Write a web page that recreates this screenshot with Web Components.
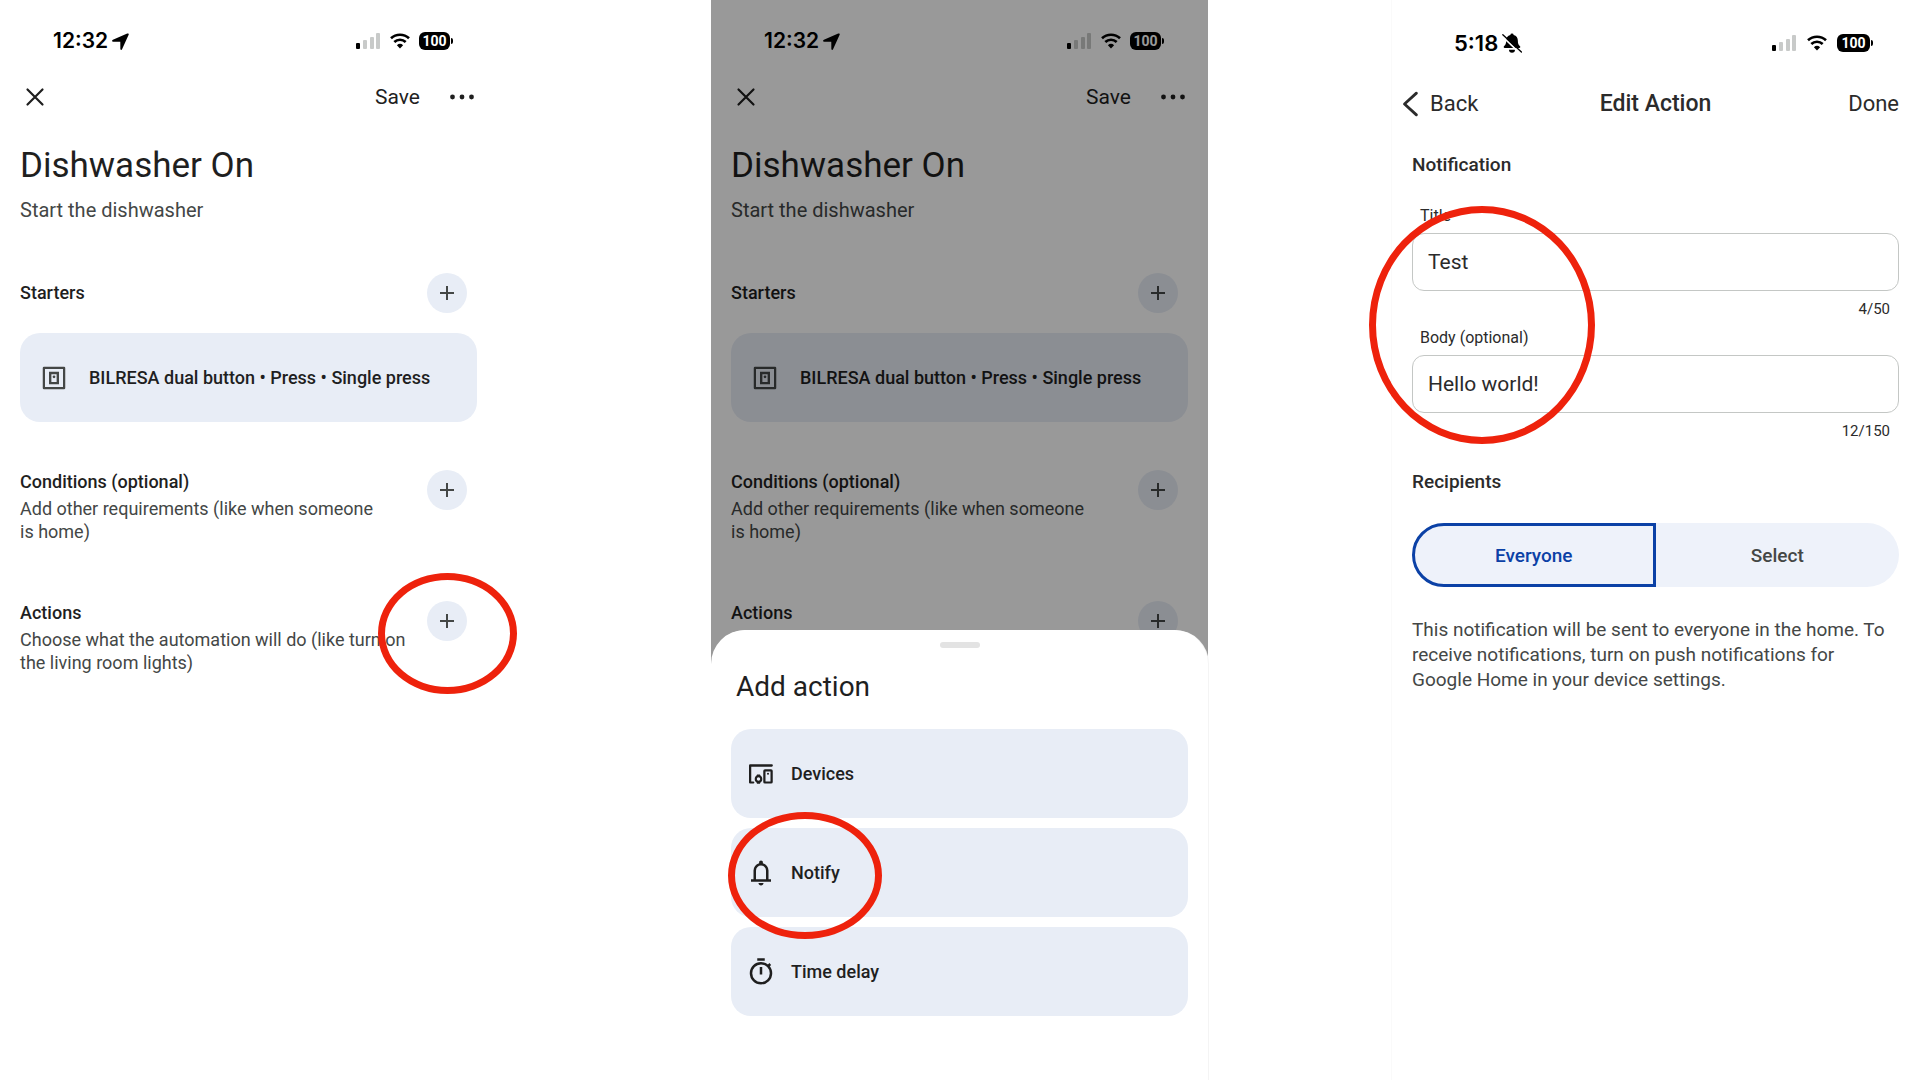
<!DOCTYPE html>
<html lang="en">
<head>
  <meta charset="utf-8">
  <meta name="viewport" content="width=device-width, initial-scale=1">
  <title>Dishwasher On</title>
  <style>
    :root {
      --text: #1f1f1f;
      --muted: #444746;
      --surface: #e8edf6;
      --primary: #0b41a6;
      --ring: #ee220c;
    }
    body {
      margin: 0;
      background: #fff;
      color: var(--text);
      font-family: Roboto, "Liberation Sans", sans-serif;
    }
  </style>
</head>
<body>
  <home-flow></home-flow>

  <script>
    const ICONS = {
      close: '<path d="M4.500 4.500l15 15M19.500 4.500l-15 15" fill="none" stroke="currentColor" stroke-width="2.200" stroke-linecap="round"/>',
      more: '<circle cx="2.500" cy="12" r="2.400"/><circle cx="12" cy="12" r="2.400"/><circle cx="21.500" cy="12" r="2.400"/>',
      plus: '<path d="M12 5v14M5 12h14" fill="none" stroke="currentColor" stroke-width="2"/>',
      back: '<path d="M17 2L6 12l11 10" fill="none" stroke="currentColor" stroke-width="2.6" stroke-linecap="round" stroke-linejoin="round"/>',
      button: '<path d="M4 3h16a1 1 0 0 1 1 1v16a1 1 0 0 1-1 1H4a1 1 0 0 1-1-1V4a1 1 0 0 1 1-1zm.8 1.8v14.4h14.4V4.8z" fill-rule="evenodd"/><path d="M8 7h8v10H8zm1.9 1.9v6.2h4.2V8.900z" fill-rule="evenodd"/><circle cx="12" cy="11" r="1.1"/>',
      devices: '<path d="M5.800 18.800H3.300V5.200H20.600" fill="none" stroke="currentColor" stroke-width="1.800" stroke-linecap="round" stroke-linejoin="round"/><rect x="14.700" y="9.100" width="5.800" height="9.700" rx=".5" fill="none" stroke="currentColor" stroke-width="1.800"/><circle cx="17.600" cy="11.700" r=".8"/><circle cx="10" cy="16" r="2.200" fill="none" stroke="currentColor" stroke-width="1.700"/><path d="M8.800 12.300h2.400l.6 1.900H8.200zM8.800 19.700h2.400l.6-1.900H8.200z"/>',
      bell: '<path d="M4 19v-2h2v-7q0-2.075 1.250-3.688T10.500 4.200v-.7q0-.625.438-1.062T12 2t1.063.438.437 1.062v.7q2 .5 3.250 2.113T18 10v7h2v2zm8 3q-.825 0-1.412-.587T10 20h4q0 .825-.587 1.413T12 22m-4-5h8v-7q0-1.650-1.175-2.825T12 6 9.175 7.175 8 10z"/>',
      timer: '<path d="M9 1h6v2H9zM11 8h2v6h-2z"/><circle cx="12" cy="13" r="8" fill="none" stroke="currentColor" stroke-width="2"/><path d="M17.500 7.500l1.900-1.900" fill="none" stroke="currentColor" stroke-width="2"/>',
      location: '<path d="M23.500 2.500Q24.300-.2 21.500.8L1.300 9.700q-2.600 1.700.4 2.700l10 .1.100 10q.8 2.800 2.400.4z"/>',
      muted: '<path d="M12 .6a2 2 0 0 1 2 1.700c3.400.9 5 3.500 5 6.700 0 4.200 1 5.400 2.600 6.900.8.800.3 2.100-.8 2.100H3.200c-1.100 0-1.600-1.300-.8-2.100C4 14.400 5 13.200 5 9c0-3.200 1.600-5.800 5-6.700a2 2 0 0 1 2-1.700zM8.400 20h7.200a3.600 3.600 0 0 1-7.200 0z"/><path d="M0 3.800L21.500 24.300" stroke="#fff" stroke-width="2"/><path d="M1 2L23.300 22.800" stroke="currentColor" stroke-width="1.600" stroke-linecap="round"/>',
    };

    class AppIcon extends HTMLElement {
      connectedCallback() {
        this.attachShadow({ mode: 'open' }).innerHTML = `
          <style>
            :host {
              display: block;
              flex: none;
              width: var(--icon-size, 24px);
              height: var(--icon-size, 24px);
            }
            svg { display: block; width: 100%; height: 100%; }
          </style>
          <svg viewBox="0 0 24 24" fill="currentColor" aria-hidden="true">${ICONS[this.getAttribute('name')]}</svg>
        `;
      }
    }

    // Status bar of the phone: time, signal, wifi and battery
    class StatusBar extends HTMLElement {
      connectedCallback() {
        this.attachShadow({ mode: 'open' }).innerHTML = `
          <style>
            :host {
              display: flex;
              align-items: center;
              justify-content: space-between;
              height: 32px;
              color: #000;
            }
            div { display: flex; align-items: center; }
            .time { gap: 4px; font: 600 var(--status-size, 21px)/32px Inter, sans-serif; }
            .system { gap: var(--status-gap, 9px); }
            app-icon { --icon-size: var(--status-icon, 17px); }
            svg { display: block; }
            .battery {
              width: var(--battery-width, 31px);
              border-radius: 6px;
              background: #000;
              color: #fff;
              font-size: 14px;
              font-weight: 700;
              line-height: 18px;
              text-align: center;
            }
            .nub { width: 2px; height: 6px; margin-left: 1px; border-radius: 0 2px 2px 0; background: #000; }
          </style>
          <div class="time">
            <span>${this.getAttribute('time')}</span>
            <app-icon name="${this.getAttribute('icon')}"></app-icon>
          </div>
          <div class="system">
            <svg width="25" height="16" viewBox="0 0 25 16" aria-hidden="true">
              <rect y="10" width="4" height="6" rx="1"/>
              <g fill="#c8cac9">
                <rect x="7" y="7" width="4" height="9" rx="1"/>
                <rect x="14" y="4" width="4" height="12" rx="1"/>
                <rect x="20" y="0" width="4" height="16" rx="1"/>
              </g>
            </svg>
            <svg width="20" height="16" viewBox="0 0 20 16" aria-hidden="true">
              <g fill="none" stroke="#000" stroke-width="2.600">
                <path d="M1 5.300a13 13 0 0 1 18 0"/>
                <path d="M4.300 9a8.200 8.200 0 0 1 11.400 0"/>
              </g>
              <path d="M10 15.500l-3.100-3.200a4.500 4.500 0 0 1 6.200 0z"/>
            </svg>
            <div>
              <span class="battery">100</span>
              <span class="nub"></span>
            </div>
          </div>
        `;
      }
    }

    // Hand-drawn style highlight laid over whatever it is placed in
    class MarkRing extends HTMLElement {
      connectedCallback() {
        this.attachShadow({ mode: 'open' }).innerHTML = `
          <style>
            :host {
              position: absolute;
              z-index: 1;
              box-sizing: border-box;
              border: 7px solid var(--ring);
              border-radius: 50%;
              pointer-events: none;
            }
          </style>
        `;
      }
    }

    class AddSection extends HTMLElement {
      connectedCallback() {
        this.attachShadow({ mode: 'open' }).innerHTML = `
          <style>
            :host {
              display: flex;
              align-items: flex-start;
              justify-content: space-between;
              position: relative;
              padding-right: 10px;
            }
            :host([single]) { align-items: center; }
            h2 { margin: 0; font-size: 18px; font-weight: 500; line-height: 24px; }
            p { margin: 3px 0 0; color: var(--muted); font-size: 18px; line-height: 23px; }
            button {
              display: grid;
              place-items: center;
              flex: none;
              width: 40px;
              height: 40px;
              padding: 0;
              border: 0;
              border-radius: 50%;
              background: var(--surface);
              color: var(--muted);
              --icon-size: 24px;
            }
          </style>
          <div>
            <h2>${this.getAttribute('heading')}</h2>
            ${this.hasAttribute('single') ? '' : '<p><slot></slot></p>'}
          </div>
          <button type="button" aria-label="Add"><app-icon name="plus"></app-icon></button>
          <slot name="mark"></slot>
        `;
      }
    }

    class ActionCard extends HTMLElement {
      connectedCallback() {
        this.attachShadow({ mode: 'open' }).innerHTML = `
          <style>
            :host { display: block; position: relative; }
            button {
              display: flex;
              align-items: center;
              gap: var(--card-gap, 15px);
              width: 100%;
              height: 89px;
              padding: 0 var(--card-pad, 15px);
              border: 0;
              border-radius: 20px;
              background: var(--surface);
              color: var(--text);
              font: 500 18px/24px Roboto, sans-serif;
              text-align: left;
              --icon-size: 30px;
            }
            app-icon { color: var(--card-icon, currentColor); }
          </style>
          <button type="button">
            <app-icon name="${this.getAttribute('icon')}"></app-icon>
            <span><slot></slot></span>
          </button>
          <slot name="mark"></slot>
        `;
      }
    }

    class AutomationScreen extends HTMLElement {
      connectedCallback() {
        this.attachShadow({ mode: 'open' }).innerHTML = `
          <style>
            :host { display: block; position: relative; padding-top: 25px; }
            status-bar { padding: 0 44px 0 53px; }
            header {
              display: flex;
              align-items: center;
              height: 40px;
              margin-top: 20px;
              padding: 0 23px;
            }
            header button {
              padding: 0;
              border: 0;
              background: none;
              color: inherit;
              font: 21px/40px Roboto, sans-serif;
            }
            .save { margin: 0 30px 0 auto; }
            main { padding: 29px 20px 0; }
            h1 { margin: 0; font-size: 35px; font-weight: 400; line-height: 40px; }
            .summary { margin: 11px 0 50px; color: var(--muted); font-size: 20px; line-height: 26px; }
            action-card {
              margin: 20px 0 48px;
              --card-pad: 19px;
              --card-gap: 20px;
              --card-icon: var(--muted);
            }
            add-section + add-section { margin-top: 58px; }
            /* this line lies under the sheet */
            :host([covered]) .hint { visibility: hidden; }
          </style>
          <status-bar time="12:32" icon="location"></status-bar>
          <header>
            <button type="button" aria-label="Close"><app-icon name="close"></app-icon></button>
            <button type="button" class="save">Save</button>
            <button type="button" aria-label="More"><app-icon name="more"></app-icon></button>
          </header>
          <main>
            <h1>Dishwasher On</h1>
            <p class="summary">Start the dishwasher</p>
            <add-section heading="Starters" single></add-section>
            <action-card icon="button">BILRESA dual button • Press • Single press</action-card>
            <add-section heading="Conditions (optional)">Add other requirements (like when someone<br>is home)</add-section>
            <add-section heading="Actions">
              <span class="hint">Choose what the automation will do (like turn on<br>the living room lights)</span>
              <slot name="mark" slot="mark"></slot>
            </add-section>
          </main>
          <slot></slot>
        `;
      }
    }

    class ActionSheet extends HTMLElement {
      connectedCallback() {
        this.attachShadow({ mode: 'open' }).innerHTML = `
          <style>
            :host {
              display: flex;
              flex-direction: column;
              justify-content: flex-end;
              position: absolute;
              inset: 0;
              background: rgba(0, 0, 0, 0.4);
            }
            section {
              padding: 12px 20px 64px;
              border-radius: 34px 34px 0 0;
              background: #fff;
              box-shadow: 1px 0 0 #f4f4f4;
            }
            .handle { width: 40px; height: 6px; margin: 0 auto; border-radius: 3px; background: #e3e3e3; }
            h2 { margin: 21px 5px 24px; font-size: 28px; font-weight: 400; line-height: 36px; }
            .list { display: grid; gap: 10px; }
          </style>
          <section>
            <div class="handle"></div>
            <h2>Add action</h2>
            <div class="list"><slot></slot></div>
          </section>
        `;
      }
    }

    class TextField extends HTMLElement {
      connectedCallback() {
        const value = this.getAttribute('value');
        this.attachShadow({ mode: 'open' }).innerHTML = `
          <style>
            :host { display: block; font-size: 16px; line-height: 20px; }
            label { display: block; padding: 0 8px; }
            input {
              display: block;
              box-sizing: border-box;
              width: 100%;
              height: 58px;
              margin: 7px 0 8px;
              padding: 0 15px;
              border: 1px solid #c4c7c5;
              border-radius: 12px;
              background: none;
              color: inherit;
              font: 21px/28px Roboto, sans-serif;
            }
            output { display: block; padding: 0 9px; font-size: 15px; text-align: right; }
          </style>
          <label for="field">${this.getAttribute('label')}</label>
          <input id="field" type="text" value="${value}" maxlength="${this.getAttribute('max')}">
          <output for="field">${value.length}/${this.getAttribute('max')}</output>
        `;
      }
    }

    class RecipientPicker extends HTMLElement {
      connectedCallback() {
        this.attachShadow({ mode: 'open' }).innerHTML = `
          <style>
            :host { display: grid; grid-template-columns: 1fr 1fr; height: 64px; }
            label {
              display: grid;
              place-items: center;
              position: relative;
              box-sizing: border-box;
              border: 3px solid transparent;
              background: #eef2fa;
              color: var(--muted);
              font-size: 19px;
              font-weight: 500;
            }
            label:first-of-type { border-radius: 32px 0 0 32px; }
            label:last-of-type { border-radius: 0 32px 32px 0; }
            label:has(:checked) { border-color: var(--primary); color: var(--primary); }
            input { position: absolute; opacity: 0; margin: 0; }
          </style>
          <label><input type="radio" name="to" checked><span>Everyone</span></label>
          <label><input type="radio" name="to"><span>Select</span></label>
        `;
      }
    }

    class EditAction extends HTMLElement {
      connectedCallback() {
        this.attachShadow({ mode: 'open' }).innerHTML = `
          <style>
            :host {
              display: block;
              box-sizing: border-box;
              padding: 27px 21px 0;
              box-shadow: inset 1px 0 0 #fafafa;
              color: #2b2b2b;
            }
            status-bar {
              padding: 0 26px 0 42px;
              --status-size: 22px;
              --status-icon: 20px;
              --status-gap: 10px;
              --battery-width: 33px;
            }
            header {
              display: grid;
              grid-template-columns: 1fr auto 1fr;
              align-items: center;
              height: 40px;
              margin: 25px 0 27px;
            }
            header button {
              display: flex;
              align-items: center;
              gap: 6px;
              padding: 0;
              border: 0;
              background: none;
              color: inherit;
              font: 22px/40px Roboto, sans-serif;
            }
            .back { margin-left: -14px; --icon-size: 26px; }
            .done { justify-self: end; }
            h1 { margin: 0; font-size: 23px; font-weight: 500; line-height: 40px; }
            h2 { margin: 29px 0; font-size: 19px; font-weight: 500; line-height: 24px; }
            .fields { display: grid; gap: 9px; position: relative; }
            p { margin: 30px 0 0; padding-right: 9px; color: var(--muted); font-size: 19px; line-height: 25px; }
            mark-ring { top: 0; left: -43px; width: 226px; height: 238px; }
          </style>
          <status-bar time="5:18" icon="muted"></status-bar>
          <header>
            <button type="button" class="back"><app-icon name="back"></app-icon>Back</button>
            <h1>Edit Action</h1>
            <button type="button" class="done">Done</button>
          </header>
          <h2>Notification</h2>
          <div class="fields">
            <text-field label="Title" value="Test" max="50"></text-field>
            <text-field label="Body (optional)" value="Hello world!" max="150"></text-field>
            <mark-ring></mark-ring>
          </div>
          <h2>Recipients</h2>
          <recipient-picker></recipient-picker>
          <p>This notification will be sent to everyone in the home. To receive notifications, turn on push notifications for Google Home in your device settings.</p>
        `;
      }
    }

    class HomeFlow extends HTMLElement {
      connectedCallback() {
        this.attachShadow({ mode: 'open' }).innerHTML = `
          <style>
            :host {
              display: grid;
              grid-template-columns: 497fr 214fr 497fr 183fr 529fr;
              min-height: 100vh;
            }
            .second { grid-column: 3; }
            edit-action { grid-column: 5; }
            .plus { top: -28px; right: -40px; width: 139px; height: 121px; }
            .notify { top: -16px; left: -3px; width: 154px; height: 127px; }
          </style>
          <automation-screen>
            <mark-ring slot="mark" class="plus"></mark-ring>
          </automation-screen>
          <automation-screen class="second" covered>
            <action-sheet>
              <action-card icon="devices">Devices</action-card>
              <action-card icon="bell">Notify<mark-ring slot="mark" class="notify"></mark-ring></action-card>
              <action-card icon="timer">Time delay</action-card>
            </action-sheet>
          </automation-screen>
          <edit-action></edit-action>
        `;
      }
    }

    customElements.define('app-icon', AppIcon);
    customElements.define('status-bar', StatusBar);
    customElements.define('mark-ring', MarkRing);
    customElements.define('add-section', AddSection);
    customElements.define('action-card', ActionCard);
    customElements.define('automation-screen', AutomationScreen);
    customElements.define('action-sheet', ActionSheet);
    customElements.define('text-field', TextField);
    customElements.define('recipient-picker', RecipientPicker);
    customElements.define('edit-action', EditAction);
    customElements.define('home-flow', HomeFlow);
  </script>
</body>
</html>
